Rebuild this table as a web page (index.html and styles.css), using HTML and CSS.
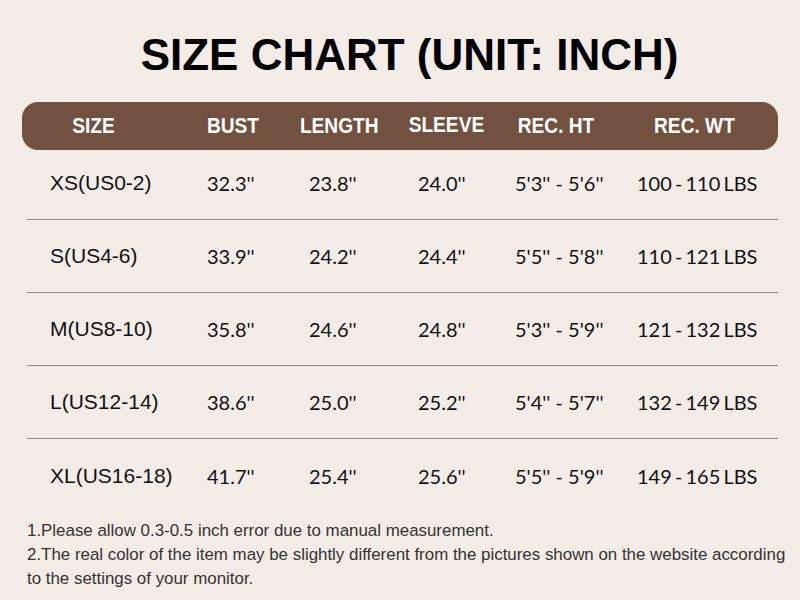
FILE: index.html
```html
<!DOCTYPE html>
<html>
<head>
<meta charset="utf-8">
<link rel="stylesheet" href="styles.css">
</head>
<body>
<div class="page">
  <h1 class="title">SIZE CHART (UNIT: INCH)</h1>
  <div class="head">
    <div class="c"><span>SIZE</span></div>
    <div class="c"><span>BUST</span></div>
    <div class="c"><span>LENGTH</span></div>
    <div class="c up"><span>SLEEVE</span></div>
    <div class="c"><span>REC. HT</span></div>
    <div class="c"><span>REC. WT</span></div>
  </div>
  <div class="rows">
    <div class="row">
      <div class="s">XS(US0-2)</div><div class="n">32.3''</div><div class="n">23.8''</div><div class="n">24.0''</div><div class="n">5'3'' - 5'6''</div><div class="n w">100 - 110 LBS</div>
    </div>
    <div class="row">
      <div class="s">S(US4-6)</div><div class="n">33.9''</div><div class="n">24.2''</div><div class="n">24.4''</div><div class="n">5'5'' - 5'8''</div><div class="n w">110 - 121 LBS</div>
    </div>
    <div class="row">
      <div class="s">M(US8-10)</div><div class="n">35.8''</div><div class="n">24.6''</div><div class="n">24.8''</div><div class="n">5'3'' - 5'9''</div><div class="n w">121 - 132 LBS</div>
    </div>
    <div class="row">
      <div class="s">L(US12-14)</div><div class="n">38.6''</div><div class="n">25.0''</div><div class="n">25.2''</div><div class="n">5'4'' - 5'7''</div><div class="n w">132 - 149 LBS</div>
    </div>
    <div class="row last">
      <div class="s">XL(US16-18)</div><div class="n">41.7''</div><div class="n">25.4''</div><div class="n">25.6''</div><div class="n">5'5'' - 5'9''</div><div class="n w">149 - 165 LBS</div>
    </div>
  </div>
  <div class="notes">
    <p>1.Please allow 0.3-0.5 inch error due to manual measurement.</p>
    <p>2.The real color of the item may be slightly different from the pictures shown on the website according to the settings of your monitor.</p>
  </div>
</div>
</body>
</html>
```
FILE: styles.css
```css
html, body {
  margin: 0;
  padding: 0;
  background: #f3ece7;
}
.page {
  width: 800px;
  height: 600px;
  overflow: hidden;
  display: flex;
  flex-direction: column;
}
.title {
  margin: 29px 0 0;
  padding-left: 19px;
  height: 73px;
  font-family: "Liberation Sans", Arial, sans-serif;
  font-weight: bold;
  font-size: 44px;
  line-height: 52px;
  text-align: center;
  color: #000;
}
.head {
  flex: none;
  margin: 0 22px;
  height: 48px;
  border-radius: 16px;
  background: #735140;
  display: grid;
  grid-template-columns: 142px 138px 74px 140px 80px 196px;
  align-items: center;
  color: #fff;
  font-family: "Liberation Sans", Arial, sans-serif;
  font-weight: bold;
  font-size: 22px;
}
.c {
  display: flex;
  justify-content: center;
  white-space: nowrap;
}
.c span {
  display: inline-block;
  transform: scaleX(0.87);
}
.up { margin-top: -3px; }
.rows {
  flex: none;
  margin: -3px 22px 0 27px;
  display: flex;
  flex-direction: column;
}
.row {
  height: 73px;
  box-sizing: border-box;
  border-bottom: 1.5px solid #8a8a8a;
  display: grid;
  grid-template-columns: 180px 102px 109px 97px 122px 141px;
  align-items: center;
  color: #111;
}
.row.last { border-bottom: none; }
.s {
  padding-left: 23px;
  font-family: "Liberation Sans", Arial, sans-serif;
  font-size: 21px;
}
.n {
  font-family: Lato, sans-serif;
  font-size: 20px;
  white-space: nowrap;
}
.n.w { word-spacing: -2px; }
.notes {
  margin: 7px 12px 0 27px;
  font-family: "Liberation Sans", Arial, sans-serif;
  font-size: 16.9px;
  color: #333;
}
.notes p {
  margin: 0;
  line-height: 24px;
}
```
